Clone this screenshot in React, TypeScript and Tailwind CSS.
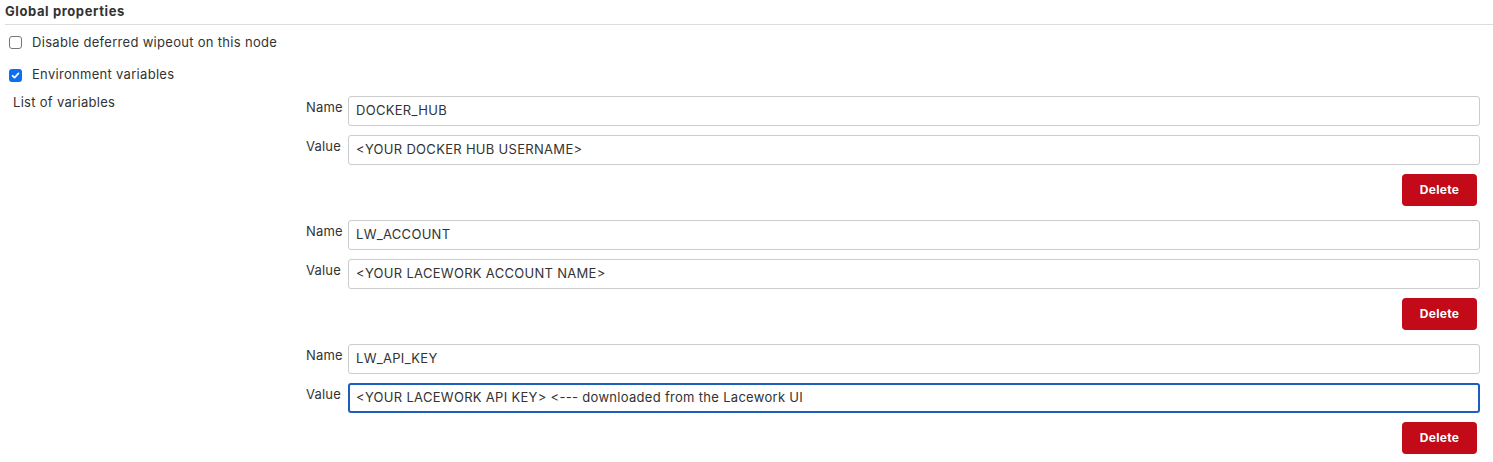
import React from "react";

const groups = [
  { name: "DOCKER_HUB", value: "<YOUR DOCKER HUB USERNAME>", focus: false },
  { name: "LW_ACCOUNT", value: "<YOUR LACEWORK ACCOUNT NAME>", focus: false },
  { name: "LW_API_KEY", value: "<YOUR LACEWORK API KEY> <--- downloaded from the Lacework UI", focus: true },
];

function Field({ label, value, focus }: { label: string; value: string; focus?: boolean }) {
  return (
    <div className="flex items-start">
      <div className="w-[48px] pl-[6px] pt-[3px] text-[13px] leading-[16px] text-[#333] tracking-[0.2px]">{label}</div>
      <div
        className={
          "flex-1 h-[30px] rounded-[3px] bg-white flex items-center text-[13px] text-[#333] tracking-[0.3px] " +
          (focus ? "border-2 border-[#1c5ebd] pl-[6px]" : "border border-[#ccc] pl-[7px]")
        }
      >
        {value}
      </div>
    </div>
  );
}

export default function App() {
  return (
    <div
      className="w-[1493px] h-[462px] bg-white text-[#333] overflow-hidden [font-variant-ligatures:none] [font-feature-settings:'calt'_0,'liga'_0]"
      style={{ fontFamily: "Inter, 'Noto Sans', sans-serif" }}
    >
      <div className="pl-[5px]">
        <div className="h-[25px] border-b border-[#ddd] pt-[3px] text-[13px] font-bold leading-[16px] text-[#333] tracking-[0.6px]">
          Global properties
        </div>
      </div>
      <div className="flex items-center h-[34px] pl-[9px] pt-[1px]">
        <span className="w-[13px] h-[13px] rounded-[3px] border border-[#767676] bg-white" />
        <span className="ml-[10px] text-[13px] text-[#333] tracking-[0.3px]">Disable deferred wipeout on this node</span>
      </div>
      <div className="flex items-center h-[30px] pl-[9px] pt-[2px]">
        <span className="w-[13px] h-[13px] rounded-[3px] bg-[#0b6ff6] flex items-center justify-center">
          <svg width="9" height="9" viewBox="0 0 10 10">
            <path d="M1.8 5.3 L4 7.4 L8.3 2.6" fill="none" stroke="white" strokeWidth="1.9" strokeLinecap="round" strokeLinejoin="round" />
          </svg>
        </span>
        <span className="ml-[10px] text-[13px] text-[#333] tracking-[0.3px]">Environment variables</span>
      </div>
      <div className="flex mt-[3px]">
        <div className="w-[300px] pl-[13px] pt-[2px] text-[13px] leading-[16px] text-[#333] tracking-[0.3px]">List of variables</div>
        <div className="flex-1 pr-[13px] pt-[4px] flex flex-col gap-[14px]">
          {groups.map((g) => (
            <div key={g.name} className="flex flex-col">
              <Field label="Name" value={g.name} />
              <div className="h-[9px]" />
              <Field label="Value" value={g.value} focus={g.focus} />
              <div className="flex justify-end pr-[3px] pt-[9px]">
                <button className="w-[75px] h-[32px] rounded-[4px] bg-[#c20a19] text-white text-[12px] font-bold tracking-[0.3px]">
                  Delete
                </button>
              </div>
            </div>
          ))}
        </div>
      </div>
    </div>
  );
}
